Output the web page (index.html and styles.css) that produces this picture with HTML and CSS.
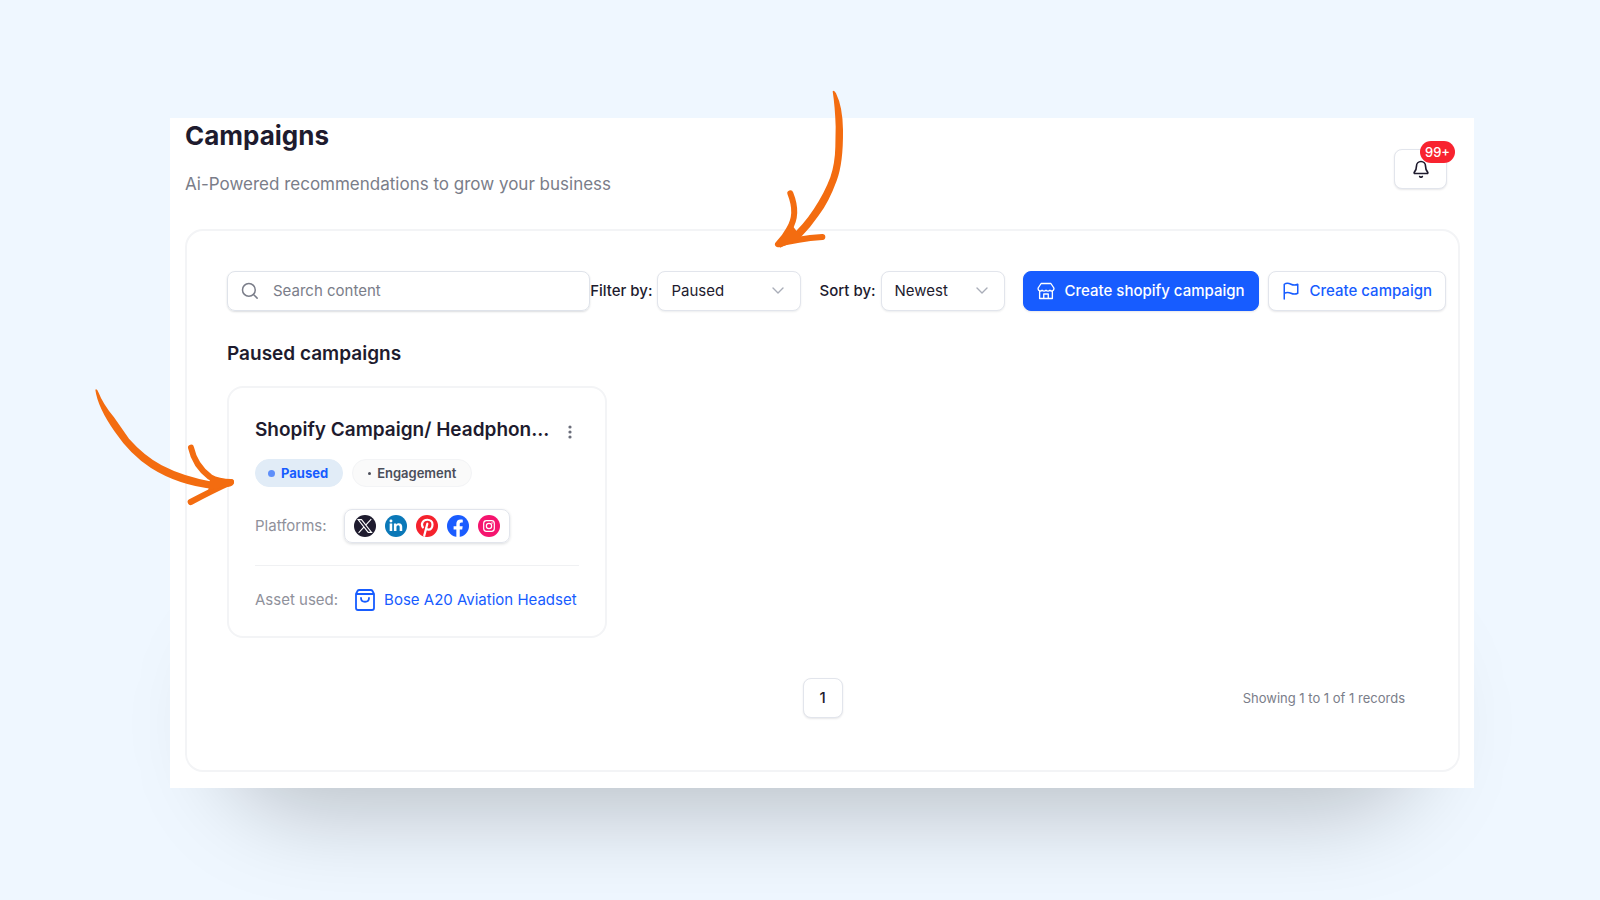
FILE: index.html
```
<!DOCTYPE html>
<html lang="en">
<head>
    <meta charset="UTF-8">
    <meta name="viewport" content="width=device-width, initial-scale=1.0">
    <title>Campaigns</title>
    <link rel="stylesheet" href="styles.css">
</head>
<body>
    <main class="page">
        <header class="header">
            <div>
                <h1>Campaigns</h1>
                <p class="subtitle">Ai-Powered recommendations to grow your business</p>
            </div>
            <button class="btn bell" aria-label="Notifications">
                <svg width="18" height="18" viewBox="0 0 24 24" fill="none" stroke="currentColor" stroke-width="2.2" stroke-linecap="round" stroke-linejoin="round"><path d="M6 8a6 6 0 0 1 12 0c0 5 1.200 6.500 3 8.500 .4.500 0 1.500-.8 1.500H3.800c-.8 0-1.200-1-.8-1.500C4.800 14.500 6 13 6 8"/><path d="M10.300 22a2 2 0 0 0 3.400 0"/></svg>
                <span class="count">99+</span>
            </button>
        </header>

        <section class="panel">
            <div class="toolbar">
                <div class="search">
                    <svg width="18" height="18" viewBox="0 0 24 24" fill="none" stroke="currentColor" stroke-width="2" stroke-linecap="round"><circle cx="10.500" cy="10.500" r="8.500"/><path d="m17 17 4.500 4.500"/></svg>
                    <input type="text" placeholder="Search content" aria-label="Search content">
                </div>
                <div class="field">
                    <label for="filter">Filter by:</label>
                    <div class="select">
                        <select id="filter" class="filter-select">
                            <option>Paused</option>
                        </select>
                        <svg class="chevron" width="12" height="8" viewBox="0 0 12 8" fill="none" stroke="currentColor" stroke-width="1.400" stroke-linecap="round" stroke-linejoin="round"><path d="m1 1 5 5 5-5"/></svg>
                    </div>
                </div>
                <div class="field sort">
                    <label for="sort">Sort by:</label>
                    <div class="select">
                        <select id="sort" class="sort-select">
                            <option>Newest</option>
                        </select>
                        <svg class="chevron" width="12" height="8" viewBox="0 0 12 8" fill="none" stroke="currentColor" stroke-width="1.400" stroke-linecap="round" stroke-linejoin="round"><path d="m1 1 5 5 5-5"/></svg>
                    </div>
                </div>
                <div class="actions">
                    <button class="btn primary">
                        <svg width="18" height="18" viewBox="0 0 24 24" fill="none" stroke="currentColor" stroke-width="1.800" stroke-linecap="round" stroke-linejoin="round"><path d="M5.500 2h13L22.500 8v1.500a3 3 0 0 1-5.200 1.500 3.500 3.500 0 0 1-5.300 0 3.500 3.500 0 0 1-5.300 0A3 3 0 0 1 1.500 9.500V8zM3.500 12v10h17V12M9 22v-6h6v6"/></svg>
                        Create shopify campaign
                    </button>
                    <button class="btn outline">
                        <svg width="18" height="18" viewBox="0 0 24 24" fill="none" stroke="currentColor" stroke-width="2" stroke-linecap="round" stroke-linejoin="round"><path d="M3 22.500V3c3-2 6-1.500 9 0s6 1.500 9 0v12c-3 1.500-6 1.500-9 0s-6-1.500-9 0"/></svg>
                        Create campaign
                    </button>
                </div>
            </div>

            <h2>Paused campaigns</h2>

            <article class="campaign">
                <div class="campaign-head">
                    <h3>Shopify Campaign/ Headphon...</h3>
                    <button class="more" aria-label="More options">
                        <svg width="4" height="14" viewBox="0 0 4 14" fill="currentColor"><circle cx="2" cy="2" r="1.600"/><circle cx="2" cy="7" r="1.600"/><circle cx="2" cy="12" r="1.600"/></svg>
                    </button>
                </div>
                <div class="badges">
                    <span class="badge paused"><i class="dot"></i>Paused</span>
                    <span class="badge goal"><i class="dot"></i>Engagement</span>
                </div>
                <div class="platforms">
                    <span>Platforms:</span>
                    <div class="icons">
                        <svg width="22" height="22" viewBox="0 0 24 24"><circle cx="12" cy="12" r="12" fill="#1e1b2e"/><path d="M4.500 5h3.700l11 14h-3.700zM18.800 4.500l-6 6.500M11 13l-6 6.500" fill="none" stroke="#fff" stroke-width="1.200"/></svg>
                        <svg width="22" height="22" viewBox="0 0 24 24"><circle cx="12" cy="12" r="12" fill="#0a78b8"/><g fill="#fff"><circle cx="6.500" cy="6.500" r="1.600"/><path d="M5.100 9.200h2.800V17.500H5.100zM9.700 9.200h2.600v1.100c.7-.9 1.600-1.400 2.800-1.400 2.500 0 3.700 1.600 3.700 4v4.600H16v-4.100c0-1.300-.5-2.100-1.600-2.100-1.300 0-1.900.9-1.900 2.300v3.900H9.700z"/></g></svg>
                        <svg width="22" height="22" viewBox="0 0 24 24"><circle cx="12" cy="12" r="12" fill="#f5222d"/><path d="M7.500 13.500C5 9.500 7.500 5.200 12.300 5.200c3.500 0 5.700 2.200 5.700 5.100 0 3.400-1.900 5.700-4.400 5.700-1.300 0-2.300-.7-2.600-1.700M12.400 9.500 9 22.500" fill="none" stroke="#fff" stroke-width="2.400" stroke-linecap="round"/></svg>
                        <svg width="22" height="22" viewBox="0 0 24 24"><circle cx="12" cy="12" r="12" fill="#1a5cff"/><path d="M10.200 24v-8.300H7.200v-3.500h3V9.600c0-3 1.800-4.700 4.500-4.700 1.300 0 2.500.2 2.500.2v3h-1.400c-1.500 0-1.900.9-1.900 1.800v2.300h3.200l-.5 3.500h-2.700V24z" fill="#fff"/></svg>
                        <svg width="22" height="22" viewBox="0 0 24 24"><circle cx="12" cy="12" r="12" fill="#f5146e"/><g fill="none" stroke="#fff" stroke-width="1.300"><rect x="6.200" y="6.200" width="11.600" height="11.600" rx="3"/><circle cx="12" cy="12" r="2.900"/></g><circle cx="15.300" cy="8.700" r=".8" fill="#fff"/></svg>
                    </div>
                </div>
                <div class="asset">
                    <span>Asset used:</span>
                    <a href="#">
                        <svg width="20" height="22" viewBox="0 0 20 22" fill="none" stroke="currentColor" stroke-width="1.800" stroke-linecap="round" stroke-linejoin="round"><path d="M1 5 2.500 2q.5-1 2-1h11q1.500 0 2 1L19 5v14q0 2-2 2H3q-2 0-2-2zM1 5h18"/><path d="M6 9c0 5 8 5 8 0"/></svg>
                        Bose A20 Aviation Headset
                    </a>
                </div>
            </article>

            <footer class="pager">
                <button class="btn page-number">1</button>
                <span class="records">Showing 1 to 1 of 1 records</span>
            </footer>
        </section>

        <svg class="arrow arrow-filter" viewBox="570 21 240 498" aria-hidden="true">
            <path class="fill" d="M758 34Q762 29 768 40Q788 80 789 150Q790 250 770 302Q747 365 717 405Q692 442 657 478L630 470Q670 435 702 386Q733 340 751 292Q765 250 766 200L767 140Q765 80 758 34z"/>
            <path class="line" d="M631 340C648 382 645 420 627 448Q615 470 594 493Q652 476 727 471"/>
            <path class="fill" d="M590 488L640 440L665 474L600 503z"/>
        </svg>
        <svg class="arrow arrow-card" viewBox="36 45 441 369" aria-hidden="true">
            <path class="fill" d="M46 59Q50 54 56 68Q68 100 102 142Q127 178 147 206Q190 255 245 286Q310 320 400 336L405 358Q295 346 213 294Q151 254 105 186Q53 112 46 59z"/>
            <path class="line" d="M333 233C342 275 366 303 390 321Q415 335 453 336Q400 360 332 396"/>
            <path class="fill" d="M390 325L455 328Q465 330 461 342Q455 352 430 352L385 360z"/>
        </svg>
    </main>
</body>
</html>
```
FILE: styles.css
```
* {
    box-sizing: border-box;
}
body {
    margin: 0;
    padding: 118px 126px 112px 170px;
    min-height: 100vh;
    background-color: #eff7ff;
    color: #1e1b2e;
    font-family: Inter, "Liberation Sans", sans-serif;
    font-size: 16px;
    line-height: 24px;
}
h1, h2, h3, p {
    margin: 0;
}
button, input, select {
    font: inherit;
    color: inherit;
}
button {
    cursor: pointer;
}
svg {
    flex-shrink: 0;
}
.page {
    position: relative;
    padding: 0 14px 16px 15px;
    background-color: #fff;
}
/* soft shadow under the bottom edge */
.page::before {
    content: "";
    position: absolute;
    z-index: -1;
    right: 50px;
    bottom: -26px;
    left: 50px;
    height: 180px;
    border-radius: 90px;
    background-color: rgba(0, 0, 0, 0.21);
    filter: blur(44px);
}
.header {
    display: flex;
    justify-content: space-between;
    align-items: flex-end;
    padding: 0 13px 33px 0;
}
h1 {
    font-size: 26px;
    line-height: 36px;
    font-weight: 700;
}
.subtitle {
    margin-top: 18px;
    font-size: 17px;
    color: #7a7d89;
}
.btn {
    display: flex;
    align-items: center;
    justify-content: center;
    height: 40px;
    background-color: #fff;
    border: 1px solid #e2e5ec;
    border-radius: 8px;
    box-shadow: 0 1px 2px rgba(16, 24, 40, 0.1);
    font-weight: 500;
    white-space: nowrap;
}
.bell {
    position: relative;
    width: 53px;
    margin-bottom: 7px;
}
.count {
    position: absolute;
    top: -9px;
    right: -9px;
    padding: 0 5px;
    border-radius: 11px;
    background-color: #f8232f;
    color: #fff;
    font-size: 13px;
    line-height: 22px;
}
.panel {
    padding: 40px 12px 32px 40px;
    border: 2px solid #f3f4f6;
    border-radius: 18px;
}
.toolbar {
    display: flex;
    align-items: center;
}
.search {
    display: flex;
    align-items: center;
    gap: 14px;
    flex: 1;
    height: 40px;
    padding: 0 13px;
    border: 1px solid #dfe3ea;
    border-radius: 8px;
    box-shadow: 0 1px 2px rgba(16, 24, 40, 0.15);
    color: #7a7d89;
}
.search input {
    flex: 1;
    min-width: 0;
    padding: 0;
    border: 0;
    outline: 0;
    background: none;
    font-size: 15px;
}
.search input::placeholder {
    color: #7a7d89;
    opacity: 1;
}
.field {
    display: flex;
    align-items: center;
    gap: 5px;
    font-size: 15px;
}
.field label {
    font-weight: 500;
    white-space: nowrap;
}
.sort {
    margin-left: 18px;
}
.select {
    position: relative;
}
.select select {
    display: block;
    height: 40px;
    padding: 0 13px;
    appearance: none;
    background-color: #fff;
    border: 1px solid #e2e5ec;
    border-radius: 8px;
    box-shadow: 0 1px 2px rgba(16, 24, 40, 0.08);
}
.filter-select {
    width: 144px;
}
.sort-select {
    width: 124px;
}
.chevron {
    position: absolute;
    top: 16px;
    right: 17px;
    color: #a9adb8;
    pointer-events: none;
}
.actions {
    display: flex;
    gap: 9px;
    margin-left: 18px;
}
.actions .btn {
    gap: 10px;
    padding: 0 13px;
    font-size: 15px;
}
.actions .primary {
    background-color: #175cff;
    border-color: #175cff;
    color: #fff;
}
.actions .outline {
    color: #175cff;
}
h2 {
    margin-top: 31px;
    font-size: 19px;
    font-weight: 600;
}
.campaign {
    width: 380px;
    margin-top: 20px;
    padding: 30px 26px 24px;
    border: 2px solid #f3f4f6;
    border-radius: 16px;
}
.campaign-head {
    display: flex;
    justify-content: space-between;
    align-items: center;
}
h3 {
    font-size: 19px;
    font-weight: 600;
    white-space: nowrap;
}
.more {
    display: flex;
    padding: 4px 7px 0;
    border: 0;
    background: none;
    color: #6b6e7b;
}
.badges {
    display: flex;
    gap: 9px;
    margin-top: 17px;
}
.badge {
    display: flex;
    align-items: center;
    gap: 6px;
    height: 28px;
    padding: 0 15px;
    border: 1px solid #f3f4f6;
    border-radius: 14px;
    background-color: #fafafa;
    color: #4b4e5a;
    font-size: 13px;
    font-weight: 600;
}
.badge .dot {
    width: 3px;
    height: 3px;
    border-radius: 50%;
    background-color: currentColor;
}
.badge.paused {
    padding: 0 14px 0 12px;
    border-color: #e1ecf7;
    background-color: #e1ecf7;
    color: #175cff;
    font-weight: 700;
}
.badge.paused .dot {
    width: 7px;
    height: 7px;
    background-color: #5e8ffa;
}
.platforms {
    display: flex;
    align-items: center;
    gap: 17px;
    margin-top: 22px;
    padding-bottom: 22px;
    border-bottom: 1px solid #f0f1f3;
    color: #8f919b;
    font-size: 15px;
}
.icons {
    display: flex;
    gap: 9px;
    padding: 5px 9px;
    border: 1px solid #e2e5ec;
    border-radius: 8px;
    box-shadow: 0 1px 3px rgba(16, 24, 40, 0.15);
}
.asset {
    display: flex;
    align-items: center;
    gap: 17px;
    margin-top: 22px;
    color: #8f919b;
    font-size: 15px;
    white-space: nowrap;
}
.asset a {
    display: flex;
    align-items: center;
    gap: 9px;
    color: #175cff;
    text-decoration: none;
}
.pager {
    display: grid;
    grid-template-columns: 1fr auto 1fr;
    align-items: center;
    margin-top: 40px;
    padding: 0 41px 20px 13px;
}
.page-number {
    grid-column: 2;
    width: 40px;
    font-size: 15px;
}
.records {
    justify-self: end;
    color: #7a7d89;
    font-size: 13px;
}
/* hand-drawn pointers laid over the page */
.arrow {
    position: absolute;
    pointer-events: none;
}
.arrow .fill {
    fill: #f36c10;
}
.arrow .line {
    fill: none;
    stroke: #f36c10;
    stroke-width: 18;
    stroke-linecap: round;
    stroke-linejoin: round;
}
.arrow-filter {
    top: -31px;
    left: 600px;
    width: 80px;
    height: 166px;
}
.arrow-card {
    top: 267px;
    left: -78px;
    width: 147px;
    height: 123px;
}
```
